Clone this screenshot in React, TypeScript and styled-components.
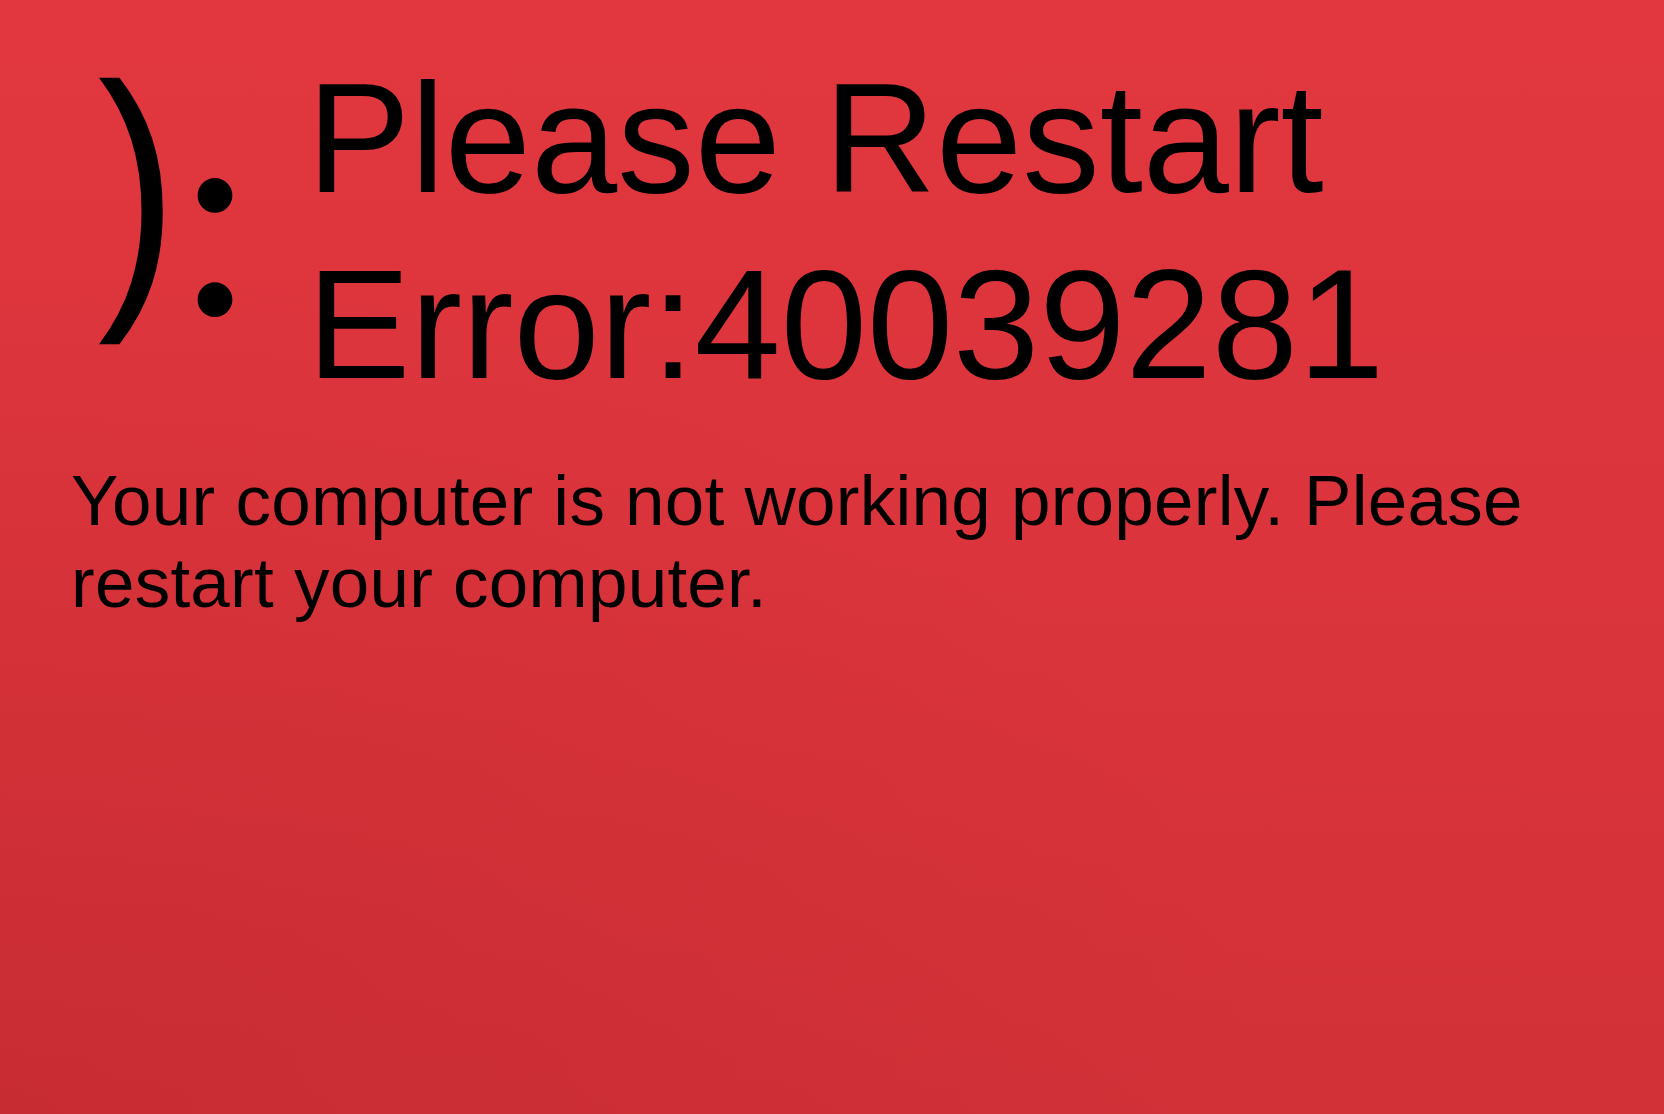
import React from "react";
import styled, { createGlobalStyle } from "styled-components";

const GlobalStyle = createGlobalStyle`
  html, body {
    margin: 0;
    padding: 0;
    background: #dc343c;
  }
  #root {
    min-height: 100vh;
  }
`;

const Screen = styled.main`
  box-sizing: border-box;
  min-height: 100vh;
  padding: 43px 40px 0 71px;
  background:
    radial-gradient(ellipse at 0% 100%, rgba(170, 30, 35, 0.25) 0%, rgba(170, 30, 35, 0) 55%),
    linear-gradient(180deg, #e2373f 0%, #db343c 50%, #d23138 100%);
  color: #000;
  font-family: "Liberation Sans", Arial, Helvetica, sans-serif;
  overflow: hidden;
`;

const Header = styled.header`
  display: flex;
  align-items: flex-start;
`;

const Face = styled.div`
  display: flex;
  align-items: flex-start;
  width: 217px;
  margin-left: 19px;
  flex-shrink: 0;
`;

const Mouth = styled.span`
  display: inline-block;
  font-family: "Liberation Sans", Arial, sans-serif;
  font-size: 286px;
  line-height: 1;
  transform: scaleX(0.84);
`;

const Eyes = styled.span`
  font-family: Lato, "Noto Sans", sans-serif;
  font-size: 278px;
  line-height: 1;
  margin: 26px 0 0 -5px;
`;

const Title = styled.h1`
  margin: 3px 0 0;
  font-weight: 400;
  font-size: 155px;
  line-height: 186px;
  white-space: nowrap;
`;

const TitleLine = styled.span`
  display: block;
`;

const Message = styled.p`
  margin: 42px 0 0;
  max-width: 1540px;
  font-size: 71px;
  line-height: 82px;
  letter-spacing: 0.25px;
  font-weight: 400;
`;

export default function App() {
  return (
    <>
      <GlobalStyle />
      <Screen>
        <Header>
          <Face aria-label="sad face">
            <Mouth>)</Mouth>
            <Eyes>:</Eyes>
          </Face>
          <Title>
            <TitleLine>Please Restart</TitleLine>
            <TitleLine>Error:40039281</TitleLine>
          </Title>
        </Header>
        <Message>
          Your computer is not working properly. Please restart your computer.
        </Message>
      </Screen>
    </>
  );
}
